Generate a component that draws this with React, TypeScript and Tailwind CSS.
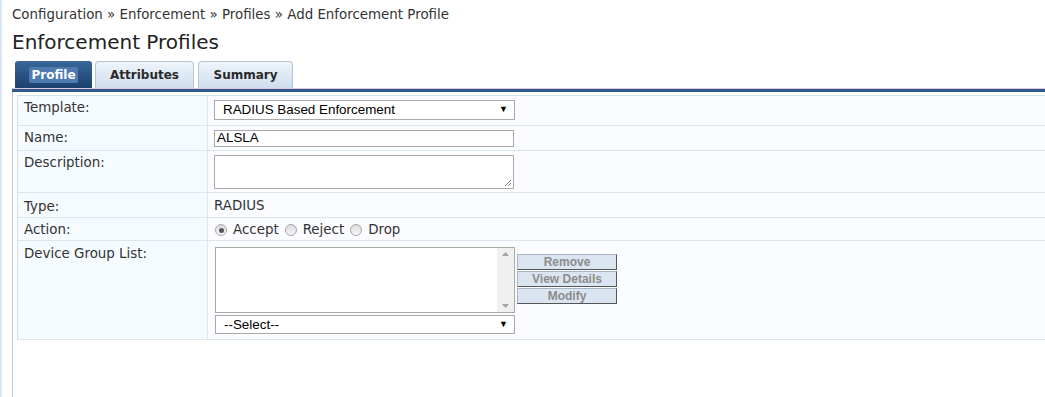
import React from 'react';

function Radio({ checked }: { checked?: boolean }) {
  return (
    <span className="inline-flex h-[12px] w-[12px] items-center justify-center rounded-full border border-[#a6a6a6] bg-gradient-to-b from-[#dcdcdc] to-[#f7f7f7]">
      {checked && <span className="h-[5px] w-[5px] rounded-full bg-[#555]" />}
    </span>
  );
}

function FakeSelect({ text, className }: { text: string; className?: string }) {
  return (
    <div
      className={`flex items-center justify-between border border-[#a9a9a9] bg-white pl-[8px] pr-[6px] font-['Liberation_Sans',Arial,sans-serif] text-[13.4px] text-black ${className ?? ''}`}
    >
      <span>{text}</span>
      <span className="text-[9px]">▼</span>
    </div>
  );
}

function GreyButton({ label }: { label: string }) {
  return (
    <div className="flex h-[16px] w-[100px] items-center justify-center border border-t-[#a8b4c2] border-l-[#a8b4c2] border-r-[#555] border-b-[#555] bg-[#dbe5f1] font-['Liberation_Sans',Arial,sans-serif] text-[12px] font-bold leading-none text-[#8c8c8c]">
      {label}
    </div>
  );
}

const rowLine = 'border-b border-[#dde6ee]';
const labelCell = `${rowLine} border-r border-[#dde6ee] bg-[#f5fbff] pl-[6px] pt-[2px]`;
const valueCell = `${rowLine} bg-[#fbfcff] pl-[6px]`;

export default function App() {
  return (
    <div className="h-[397px] w-[1045px] overflow-hidden border-l-2 border-[#d9e6f5] bg-white font-['DejaVu_Sans',Verdana,sans-serif] text-[13.4px] text-[#333]">
      <div className="pl-[10px] pt-[6px]">
        <div className="leading-[17px]">Configuration » Enforcement » Profiles » Add Enforcement Profile</div>
        <h1 className="mt-[7px] text-[20px] leading-[24px] text-[#222]">Enforcement Profiles</h1>

        <div className="mt-[7px] flex items-end pl-[3px] text-[12px]">
          <div className="flex h-[27px] w-[77px] items-center justify-center rounded-t-[3px] bg-gradient-to-b from-[#3a679b] to-[#1b416e]">
            <span className="rounded-[2px] bg-[#4d7ab0] px-[2px] font-bold leading-[16px] text-white">Profile</span>
          </div>
          <div className="ml-[3px] flex h-[27px] w-[99px] items-center justify-center rounded-t-[4px] border border-b-0 border-[#b3c6dc] bg-gradient-to-b from-[#eef4fa] to-[#cfdeee] font-bold text-[#2a2a2a]">
            Attributes
          </div>
          <div className="ml-[4px] flex h-[27px] w-[95px] items-center justify-center rounded-t-[4px] border border-b-0 border-[#b3c6dc] bg-gradient-to-b from-[#eef4fa] to-[#cfdeee] font-bold text-[#2a2a2a]">
            Summary
          </div>
        </div>
        <div className="h-[4px] border-t border-[#d9c7e6] bg-[#2f5a89]" />

        <div className="h-[400px] border-l border-[#b7c8dc] pl-[4px] pt-[3px]">
          <div className="grid grid-cols-[190px_1fr] border-t border-l border-[#d6e0ea]">
            <div className={`${labelCell} h-[30px]`}>Template:</div>
            <div className={`${valueCell} pt-[4px]`}>
              <FakeSelect text="RADIUS Based Enforcement" className="h-[20px] w-[301px]" />
            </div>

            <div className={`${labelCell} h-[25px]`}>Name:</div>
            <div className={`${valueCell} pt-[4px]`}>
              <div className="flex h-[17px] w-[300px] items-center border border-[#a9a9a9] bg-white pl-[2px] font-['Liberation_Sans',Arial,sans-serif] text-[13.4px] text-black">
                ALSLA
              </div>
            </div>

            <div className={`${labelCell} h-[42px]`}>Description:</div>
            <div className={`${valueCell} pt-[4px]`}>
              <div className="relative h-[34px] w-[300px] border border-[#a9a9a9] bg-white">
                <svg className="absolute bottom-[1px] right-[1px]" width="8" height="8" viewBox="0 0 8 8">
                  <path d="M7 1L1 7M7 4L4 7" stroke="#888" strokeWidth="1" />
                </svg>
              </div>
            </div>

            <div className={`${labelCell} h-[25px] pt-[4px]`}>Type:</div>
            <div className={`${valueCell} flex items-center pt-[2px]`}>RADIUS</div>

            <div className={`${labelCell} h-[23px] pt-[2px]`}>Action:</div>
            <div className={`${valueCell} flex items-center gap-[6px] pl-[7px] pt-[2px]`}>
              <Radio checked />
              <span>Accept</span>
              <Radio />
              <span>Reject</span>
              <Radio />
              <span>Drop</span>
            </div>

            <div className={`${labelCell} h-[99px] pt-[3px]`}>Device Group List:</div>
            <div className={`${valueCell} flex pl-[7px] pt-[6px]`}>
              <div className="flex flex-col">
                <div className="flex h-[66px] w-[300px] border border-[#a9a9a9] bg-white">
                  <div className="flex-1" />
                  <div className="flex w-[17px] flex-col items-center justify-between bg-[#f0f0f0] py-[4px]">
                    <svg width="7" height="4" viewBox="0 0 7 4"><path d="M3.5 0L7 4H0z" fill="#a3a3a3" /></svg>
                    <svg width="7" height="4" viewBox="0 0 7 4"><path d="M0 0h7L3.5 4z" fill="#a3a3a3" /></svg>
                  </div>
                </div>
                <FakeSelect text="--Select--" className="mt-[2px] h-[19px] w-[300px]" />
              </div>
              <div className="ml-[2px] mt-[7px] flex flex-col gap-[1px]">
                <GreyButton label="Remove" />
                <GreyButton label="View Details" />
                <GreyButton label="Modify" />
              </div>
            </div>
          </div>
        </div>
      </div>
    </div>
  );
}
